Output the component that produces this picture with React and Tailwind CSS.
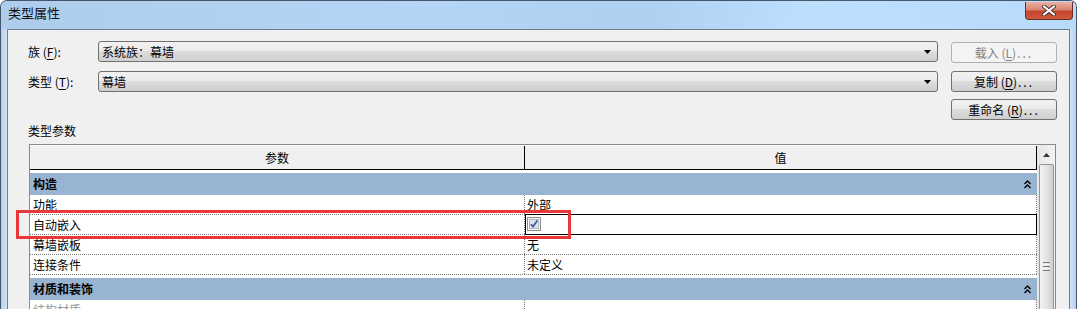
import React from "react";

function U({ children }) {
  return <span className="underline underline-offset-2">{children}</span>;
}

function Dots() {
  return <span className="tracking-[2px] ml-[1px]">...</span>;
}

function DropArrow() {
  return (
    <svg width="7" height="4" viewBox="0 0 7 4" className="block">
      <path d="M0 0H7L3.5 4Z" fill="#000" />
    </svg>
  );
}

function Dropdown({ text }) {
  return (
    <div className="w-[840px] h-[21px] rounded-[3px] border border-[#707070] bg-[linear-gradient(#f2f2f2_0%,#ebebeb_45%,#dddddd_50%,#cfcfcf_100%)] flex items-center pl-[3px] pr-[6px]">
      <span className="leading-[16px]">{text}</span>
      <span className="ml-auto">
        <DropArrow />
      </span>
    </div>
  );
}

function Btn({ children, disabled, className = "" }) {
  return (
    <div
      className={
        "w-[106px] h-[21px] rounded-[3px] border flex items-center justify-center leading-[16px] " +
        (disabled
          ? "border-[#adb2b5] bg-[#f4f4f4] text-[#838383] "
          : "border-[#707070] bg-[linear-gradient(#f2f2f2_0%,#ebebeb_45%,#dddddd_50%,#cfcfcf_100%)] text-black ") +
        className
      }
    >
      {children}
    </div>
  );
}

function Chevrons() {
  return (
    <svg width="7" height="9" viewBox="0 0 7 9" className="block">
      <path d="M0.5 4L3.5 1L6.5 4" fill="none" stroke="#000" strokeWidth="1.4" />
      <path d="M0.5 8L3.5 5L6.5 8" fill="none" stroke="#000" strokeWidth="1.4" />
    </svg>
  );
}

function GroupRow({ label }) {
  return (
    <div className="pt-[3px] bg-white">
      <div className="h-[22px] bg-[#99b4d1] flex items-center pl-[3px] pr-[6px]">
        <span className="font-bold leading-[16px]">{label}</span>
        <span className="ml-auto">
          <Chevrons />
        </span>
      </div>
    </div>
  );
}

function DataRow({ label, value, gray, selected }) {
  return (
    <div className="h-[20px] flex border-b border-dotted border-[#7a7a7a] bg-white">
      <div
        className={
          "w-[495px] border-r border-dotted border-[#7a7a7a] pl-[3px] leading-[19px] " +
          (gray ? "text-[#9a9a9a]" : "text-black")
        }
      >
        {label}
      </div>
      <div className="relative w-[512px] border-r border-dotted border-[#7a7a7a] pl-[2px] leading-[19px]">
        {selected ? (
          <>
            <div className="absolute -top-[1px] -bottom-[1px] left-0 -right-[1px] border border-black" />
            <div className="pt-[2px]">
              <svg width="14" height="14" viewBox="0 0 14 14" className="block">
                <rect x="0.5" y="0.5" width="13" height="13" fill="#f4f4f4" stroke="#8e8f8f" />
                <rect x="2.5" y="2.5" width="9" height="9" fill="#dfe3ea" stroke="#b5b8c0" />
                <path d="M3.8 7.2L6 9.6L10.4 3.6" fill="none" stroke="#3d5aa8" strokeWidth="1.7" />
              </svg>
            </div>
          </>
        ) : (
          value
        )}
      </div>
    </div>
  );
}

export default function App() {
  return (
    <div className="relative w-[1077px] h-[309px] overflow-hidden rounded-t-[7px] border border-b-0 border-[#44566b] bg-[#c4dbf2] text-[12px] text-black font-['Noto_Sans_CJK_SC','Noto_Sans',sans-serif]">
      {/* title bar */}
      <div className="h-[28px] flex items-start bg-[linear-gradient(100deg,#aecdec_0%,#b4d5f5_40%,#aed0f1_60%,#bde0ff_75%,#b9dbfb_100%)]">
        <span className="ml-[7px] mt-[4px] leading-[16px] text-[13px] text-[#101010]">类型属性</span>
        <div className="ml-auto mr-[3px] mt-[1px] w-[48px] h-[18px] rounded-b-[4px] border border-t-0 border-[#6e2b22] bg-[linear-gradient(#eab1a4_0%,#d98672_45%,#c4442c_55%,#cf5a3f_100%)] flex items-center justify-center">
          <svg width="14" height="11" viewBox="0 0 14 11" className="block">
            <path d="M2 1.5L12 9.5M12 1.5L2 9.5" stroke="#4a3030" strokeWidth="4" strokeLinecap="round" />
            <path d="M2 1.5L12 9.5M12 1.5L2 9.5" stroke="#ffffff" strokeWidth="2.2" strokeLinecap="round" />
          </svg>
        </div>
      </div>

      {/* body */}
      <div className="flex h-[280px]">
        <div className="w-[6px] bg-[linear-gradient(90deg,#b8d0ea,#cfe3f7)]" />
        <div className="flex-1 bg-[#f0f0f0] border-l border-t border-r border-[#6f7d8c] pl-[20px] pr-[12px] pt-[11px]">
          {/* row 1 */}
          <div className="h-[21px] flex items-start">
            <div className="w-[70px] leading-[21px]">
              族 (<U>F</U>):
            </div>
            <Dropdown text="系统族：幕墙" />
            <Btn disabled className="ml-[13px] mt-[1px]">
              载入 (<U>L</U>)<Dots />
            </Btn>
          </div>
          {/* row 2 */}
          <div className="h-[21px] flex items-start mt-[9px]">
            <div className="w-[70px] leading-[21px]">
              类型 (<U>T</U>):
            </div>
            <Dropdown text="幕墙" />
            <Btn className="ml-[13px]">
              复制 (<U>D</U>)<Dots />
            </Btn>
          </div>
          {/* row 3 */}
          <div className="h-[21px] flex justify-end mt-[7px]">
            <Btn>
              重命名 (<U>R</U>)<Dots />
            </Btn>
          </div>

          <div className="mt-[3px] h-[16px] leading-[16px]">类型参数</div>

          {/* table */}
          <div className="mt-[5px] ml-[1px] w-[1027px] h-[200px] border border-[#8a8a8a] bg-white flex overflow-hidden">
            <div className="w-[1007px] flex flex-col">
              <div className="h-[25px] flex border-b border-black bg-[#f0f0f0] border-t border-t-white">
                <div className="w-[495px] border-r border-black flex items-center justify-center">参数</div>
                <div className="w-[512px] border-r border-black flex items-center justify-center">值</div>
              </div>
              <GroupRow label="构造" />
              <DataRow label="功能" value="外部" />
              <DataRow label="自动嵌入" selected />
              <DataRow label="幕墙嵌板" value="无" />
              <DataRow label="连接条件" value="未定义" />
              <GroupRow label="材质和装饰" />
              <DataRow label="结构材质" value="" gray />
            </div>
            {/* scrollbar */}
            <div className="w-[18px] bg-[linear-gradient(90deg,#e6e6e6,#f3f3f3)] flex flex-col items-center">
              <div className="h-[19px] w-full flex items-center justify-center pt-[1px]">
                <svg width="7" height="4" viewBox="0 0 7 4" className="block">
                  <path d="M0 4H7L3.5 0Z" fill="#333" />
                </svg>
              </div>
              <div className="w-[15px] flex-1 rounded-[2px] border border-[#969696] bg-[linear-gradient(90deg,#f2f2f2_0%,#e4e4e4_50%,#cfcfcf_100%)] flex flex-col items-center">
                <div className="mt-[97px] flex flex-col gap-[1px]">
                  <div className="w-[7px] h-[1px] bg-[#7d7d7d]" />
                  <div className="w-[7px] h-[1px] bg-[#fafafa]" />
                  <div className="w-[7px] h-[1px] bg-[#7d7d7d]" />
                  <div className="w-[7px] h-[1px] bg-[#fafafa]" />
                  <div className="w-[7px] h-[1px] bg-[#7d7d7d]" />
                </div>
              </div>
            </div>
          </div>
        </div>
        <div className="w-[6px] bg-[linear-gradient(90deg,#cfe3f7,#b8d0ea)]" />
      </div>

      {/* annotation */}
      <div className="absolute left-[15px] top-[209px] w-[555px] h-[29px] border-[3px] border-[#e8383a]" />
    </div>
  );
}
